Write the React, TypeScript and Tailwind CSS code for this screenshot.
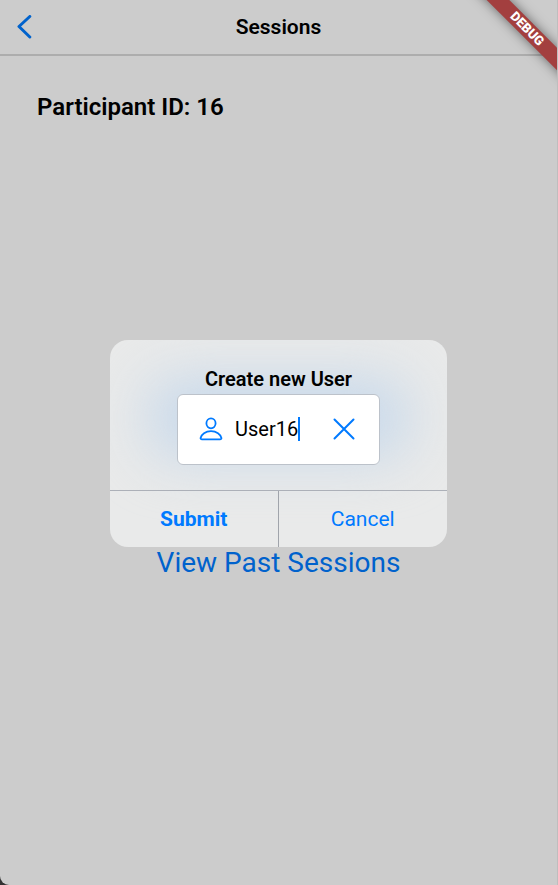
import { useState } from "react";

function PersonIcon() {
  return (
    <svg className="block size-6" viewBox="0 0 24 24" fill="none" stroke="#007aff" strokeWidth="1.8" strokeLinecap="round" strokeLinejoin="round" aria-hidden="true">
      <ellipse cx="12" cy="6.3" rx="4.6" ry="5" />
      <path d="M3 22.400h18c1 0 1.500-.6 1.400-1.400C21.700 17.100 17.400 14.200 12 14.200S2.300 17.100 1.600 21c-.1.8.4 1.400 1.400 1.400Z" />
    </svg>
  );
}

export default function App() {
  const [name, setName] = useState("User16");

  return (
    <div className="min-h-screen bg-[#333333] font-['Roboto','Liberation_Sans',sans-serif]">
      <div className="relative flex min-h-screen flex-col overflow-hidden rounded-bl-[9px] border-r border-[#bebebe] bg-[#cccccc] text-black">
        <header className="grid h-14 grid-cols-[1fr_auto_1fr] items-center border-b-2 border-[#adadad]">
          <button type="button" aria-label="Back" className="ml-4 w-5">
            <svg className="block h-6 w-4" viewBox="0 0 16 24" fill="none" stroke="#0062cc" strokeWidth="3" strokeLinecap="round" strokeLinejoin="round" aria-hidden="true">
              <path d="M13.800 1.500L3 11.500l10.800 10.500" />
            </svg>
          </button>
          <h1 className="text-[21px] leading-6 font-semibold">Sessions</h1>
        </header>

        <main className="flex flex-1 flex-col">
          <h2 className="px-[37px] pt-[35px] text-2xl leading-8 font-semibold">Participant ID: 16</h2>
          <div className="flex flex-1 flex-col items-center pt-[420px]">
            <a href="#past-sessions" className="text-[28px] leading-10 text-[#0062cc]">
              View Past Sessions
            </a>
          </div>
        </main>

        <div className="pointer-events-none absolute top-[21px] -right-[45px] flex h-4 w-[150px] rotate-45 items-center justify-center bg-[#a33f3f] shadow-[0_0_12px_rgba(0,0,0,0.5)]">
          <span className="text-[13px] leading-4 font-black text-white">DEBUG</span>
        </div>

        <div className="absolute inset-0 flex items-center justify-center pt-px">
          <form role="dialog" aria-labelledby="dialog-title" onSubmit={(e) => e.preventDefault()} className="relative w-[337px] overflow-hidden rounded-[18px] bg-[#e9eaea]">
            <div className="absolute top-10 right-10 left-10 h-[76px] rounded-3xl bg-[#c6d8eb] blur-[28px]" />
            <div className="relative flex h-[150px] flex-col items-center pt-6">
              <h3 id="dialog-title" className="text-xl leading-[30px] font-semibold">Create new User</h3>
              <div className="flex h-[71px] w-[203px] items-center rounded-md border border-[#bcc2ca] bg-white pr-6 pl-[21px]">
                <PersonIcon />
                <input
                  aria-label="User name"
                  value={name}
                  onChange={(e) => setName(e.target.value)}
                  className="ml-3 w-[63px] bg-transparent text-xl leading-6 outline-none"
                />
                <span className="h-6 w-0.5 bg-[#007aff]" aria-hidden="true" />
                <button type="button" aria-label="Clear" onClick={() => setName("")} className="ml-auto">
                  <svg className="block size-[22px]" viewBox="0 0 22 22" fill="none" stroke="#007aff" strokeWidth="2" strokeLinecap="round" aria-hidden="true">
                    <path d="M1.500 1.500l19 19M20.500 1.500l-19 19" />
                  </svg>
                </button>
              </div>
            </div>
            <div className="relative grid h-[57px] grid-cols-2 border-t border-[#acb0b8] text-[21px] text-[#007aff]">
              <button type="submit" className="border-r border-[#a0a4ab] pt-0.5 font-bold">Submit</button>
              <button type="button" className="pt-0.5">Cancel</button>
            </div>
          </form>
        </div>
      </div>
    </div>
  );
}
